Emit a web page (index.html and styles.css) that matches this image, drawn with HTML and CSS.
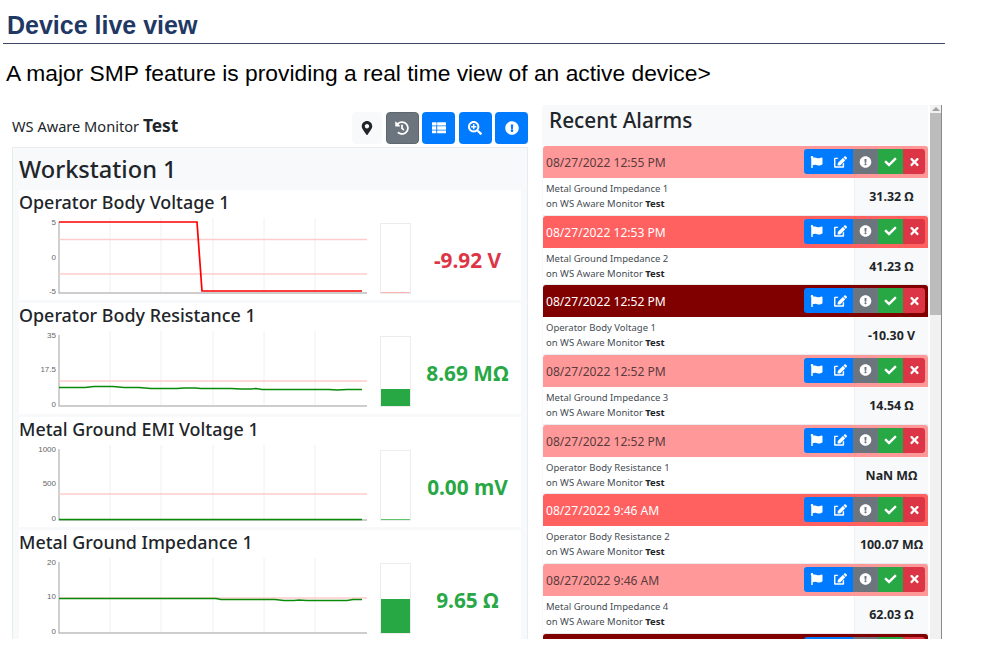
FILE: index.html
```html
<!DOCTYPE html>
<html lang="en">
<head>
<meta charset="utf-8">
<title>Device live view</title>
<link rel="stylesheet" href="styles.css">
</head>
<body>
<svg class="defs" width="0" height="0" aria-hidden="true">
  <symbol id="i-marker" viewBox="0 0 384 512"><path d="M172.268 501.67C26.97 291.031 0 255.406 0 192 0 85.961 85.961 0 192 0s192 85.961 192 192c0 63.406-26.97 99.031-172.268 309.67-9.535 13.774-29.93 13.773-39.464 0zM192 272c44.183 0 80-35.817 80-80s-35.817-80-80-80-80 35.817-80 80 35.817 80 80 80z"/></symbol>
  <symbol id="i-history" viewBox="0 0 512 512"><path d="M504 255.531c.253 136.64-111.18 248.372-247.82 248.468-59.015.042-113.223-20.53-155.822-54.911-11.077-8.94-11.905-25.541-1.839-35.607l11.267-11.267c8.609-8.609 22.353-9.551 31.891-1.984C173.062 425.135 212.781 440 256 440c101.705 0 184-82.311 184-184 0-101.705-82.311-184-184-184-48.814 0-93.149 18.969-126.068 49.932l50.754 50.754c10.08 10.08 2.941 27.314-11.313 27.314H24c-8.837 0-16-7.163-16-16V38.627c0-14.254 17.234-21.393 27.314-11.314l49.372 49.372C129.209 34.136 189.552 8 256 8c136.81 0 247.747 110.78 248 247.531zm-180.912 78.784l9.823-12.63c8.138-10.463 6.253-25.542-4.21-33.679L288 256.349V152c0-13.255-10.745-24-24-24h-16c-13.255 0-24 10.745-24 24v135.651l65.409 50.874c10.463 8.137 25.541 6.253 33.679-4.21z"/></symbol>
  <symbol id="i-list" viewBox="0 0 512 512"><path d="M24 48h120c13 0 24 11 24 24v72c0 13-11 24-24 24H24c-13 0-24-11-24-24V72c0-13 11-24 24-24zM200 48h288c13 0 24 11 24 24v72c0 13-11 24-24 24H200c-7 0-12-5-12-12V60c0-7 5-12 12-12zM24 196h120c7 0 12 5 12 12v96c0 7-5 12-12 12H12c-7 0-12-5-12-12v-96c0-7 5-12 12-12zm176 0h300c7 0 12 5 12 12v96c0 7-5 12-12 12H200c-7 0-12-5-12-12v-96c0-7 5-12 12-12zM12 344h132c7 0 12 5 12 12v84c0 7-5 12-12 12H24c-13 0-24-11-24-24v-72c0-7 5-12 12-12zm188 0h300c7 0 12 5 12 12v72c0 13-11 24-24 24H200c-7 0-12-5-12-12v-84c0-7 5-12 12-12z"/></symbol>
  <symbol id="i-zoom" viewBox="0 0 512 512"><path d="M304 192v32c0 6.6-5.4 12-12 12h-56v56c0 6.6-5.4 12-12 12h-32c-6.6 0-12-5.4-12-12v-56h-56c-6.6 0-12-5.400-12-12v-32c0-6.600 5.400-12 12-12h56v-56c0-6.600 5.400-12 12-12h32c6.600 0 12 5.400 12 12v56h56c6.600 0 12 5.400 12 12zm201 284.700L476.700 505c-9.400 9.400-24.600 9.400-33.900 0L343 405.300c-4.500-4.500-7-10.600-7-17V372c-35.300 27.600-79.700 44-128 44C93.100 416 0 322.900 0 208S93.100 0 208 0s208 93.100 208 208c0 48.300-16.400 92.700-44 128h16.300c6.400 0 12.500 2.500 17 7l99.700 99.700c9.300 9.400 9.300 24.600 0 34zM344 208c0-75.200-60.800-136-136-136S72 132.800 72 208s60.800 136 136 136 136-60.800 136-136z"/></symbol>
  <symbol id="i-alert" viewBox="0 0 512 512"><path d="M504 256c0 136.997-111.043 248-248 248S8 392.997 8 256C8 119.083 119.043 8 256 8s248 111.083 248 248zm-248 50c-25.405 0-46 20.595-46 46s20.595 46 46 46 46-20.595 46-46-20.595-46-46-46zm-43.673-165.346l7.418 136c.347 6.364 5.609 11.346 11.982 11.346h48.546c6.373 0 11.635-4.982 11.982-11.346l7.418-136c.375-6.874-5.098-12.654-11.982-12.654h-63.383c-6.884 0-12.356 5.780-11.981 12.654z"/></symbol>
  <symbol id="i-flag" viewBox="0 0 512 512"><path d="M349.565 98.783C295.978 98.783 251.721 64 184.348 64c-24.955 0-47.309 4.384-68.045 12.013a55.947 55.947 0 0 0 3.586-23.562C118.117 24.015 94.806 1.206 66.338.048 34.345-1.254 8 24.296 8 56c0 19.026 9.497 35.825 24 45.945V488c0 13.255 10.745 24 24 24h16c13.255 0 24-10.745 24-24v-94.400c28.311-12.064 63.582-22.122 114.435-22.122 53.588 0 97.844 34.783 165.217 34.783 48.169 0 86.667-16.294 122.505-40.858C506.840 359.452 512 349.571 512 339.045v-243.100c0-23.393-24.269-38.870-45.485-29.016-34.338 15.948-76.454 31.854-116.950 31.854z"/></symbol>
  <symbol id="i-edit" viewBox="0 0 576 512"><path d="M402.600 83.200l90.200 90.200c3.800 3.800 3.800 10 0 13.800L274.400 405.600l-92.800 10.300c-12.400 1.400-22.900-9.100-21.500-21.500l10.300-92.800L388.800 83.200c3.800-3.800 10-3.800 13.800 0zm162-22.900l-48.800-48.800c-15.200-15.200-39.900-15.200-55.200 0l-35.400 35.400c-3.800 3.800-3.800 10 0 13.800l90.200 90.200c3.800 3.800 10 3.800 13.800 0l35.400-35.400c15.200-15.300 15.200-40 0-55.200zM384 346.200V448H64V128h73.200c3.200 0 6.200-1.300 8.500-3.500l40-40c7.600-7.600 2.200-20.500-8.500-20.500H48C21.500 64 0 85.500 0 112v352c0 26.500 21.500 48 48 48h352c26.500 0 48-21.500 48-48V306.200c0-10.700-12.900-16-20.500-8.500l-40 40c-2.200 2.300-3.500 5.300-3.500 8.500z"/></symbol>
  <symbol id="i-check" viewBox="0 0 512 512"><path d="M173.898 439.404l-166.400-166.400c-9.997-9.997-9.997-26.206 0-36.204l36.203-36.204c9.997-9.998 26.207-9.998 36.204 0L192 312.690 432.095 72.596c9.997-9.997 26.207-9.997 36.204 0l36.203 36.204c9.997 9.997 9.997 26.206 0 36.204l-294.400 294.401c-9.998 9.997-26.207 9.997-36.204-.001z"/></symbol>
  <symbol id="i-times" viewBox="0 0 352 512"><path d="M242.720 256l100.070-100.070c12.280-12.280 12.280-32.190 0-44.480l-22.240-22.240c-12.280-12.280-32.190-12.280-44.480 0L176 189.280 75.930 89.210c-12.280-12.280-32.190-12.280-44.480 0L9.210 111.450c-12.280 12.280-12.280 32.190 0 44.480L109.280 256 9.210 356.070c-12.280 12.280-12.280 32.190 0 44.480l22.240 22.240c12.280 12.280 32.200 12.280 44.480 0L176 322.720l100.070 100.070c12.280 12.280 32.200 12.280 44.480 0l22.240-22.240c12.280-12.280 12.280-32.190 0-44.480L242.720 256z"/></symbol>
  <g id="grid">
    <path class="gridline" d="M91 0V74M142 0V74M194 0V74M245 0V74M296 0V74"/>
    <path class="axis" d="M40 4V75H348"/>
  </g>
</svg>

<header class="doc-head">
  <h1>Device live view</h1>
  <p>A major SMP feature is providing a real time view of an active device&gt;</p>
</header>

<main class="shot">
  <section class="left">
    <div class="toolbar">
      <div class="device">WS Aware Monitor <b>Test</b></div>
      <div class="tools">
        <button class="tool light"><svg class="ic"><use href="#i-marker"/></svg></button>
        <button class="tool gray"><svg class="ic"><use href="#i-history"/></svg></button>
        <button class="tool blue"><svg class="ic"><use href="#i-list"/></svg></button>
        <button class="tool blue"><svg class="ic"><use href="#i-zoom"/></svg></button>
        <button class="tool blue"><svg class="ic"><use href="#i-alert"/></svg></button>
      </div>
    </div>
    <div class="panel">
      <h2>Workstation 1</h2>

      <article class="card">
        <h3>Operator Body Voltage 1</h3>
        <div class="metric">
          <svg class="chart" viewBox="0 0 350 80" width="350" height="80">
            <use href="#grid"/>
            <path class="limit" d="M40 21.500H348M40 56H348"/>
            <path class="line red" d="M40 4H178L183 73H343"/>
            <text class="tick" x="37" y="7">5</text>
            <text class="tick" x="37" y="42">0</text>
            <text class="tick" x="37" y="76">-5</text>
          </svg>
          <div class="gauge"><div class="bar pink"></div></div>
          <div class="value bad">-9.92 V</div>
        </div>
      </article>

      <article class="card">
        <h3>Operator Body Resistance 1</h3>
        <div class="metric">
          <svg class="chart" viewBox="0 0 350 80" width="350" height="80">
            <use href="#grid"/>
            <path class="limit" d="M40 50H348"/>
            <path class="line green" d="M40 56.500H66L75 55.500H94L105 56.500H120L132 57.500H158L165 57H176L182 57.500H212L222 58H232L237 57.500L243 58.500H310L318 59L328 58.500H343"/>
            <text class="tick" x="37" y="7">35</text>
            <text class="tick" x="37" y="41">17.5</text>
            <text class="tick" x="37" y="76">0</text>
          </svg>
          <div class="gauge"><div class="bar ok" style="height:25%"></div></div>
          <div class="value good">8.69 MΩ</div>
        </div>
      </article>

      <article class="card">
        <h3>Metal Ground EMI Voltage 1</h3>
        <div class="metric">
          <svg class="chart" viewBox="0 0 350 80" width="350" height="80">
            <use href="#grid"/>
            <path class="limit" d="M40 49H348"/>
            <path class="line green" d="M40 74.500H343"/>
            <text class="tick" x="37" y="7">1000</text>
            <text class="tick" x="37" y="41">500</text>
            <text class="tick" x="37" y="76">0</text>
          </svg>
          <div class="gauge"><div class="bar thin"></div></div>
          <div class="value good">0.00 mV</div>
        </div>
      </article>

      <article class="card">
        <h3>Metal Ground Impedance 1</h3>
        <div class="metric">
          <svg class="chart" viewBox="0 0 350 80" width="350" height="80">
            <use href="#grid"/>
            <path class="limit" d="M40 40H348"/>
            <path class="line green" d="M40 40.500H197L202 41.500H256L265 42.500H275L280 42L288 42.500H328L334 41.500H343"/>
            <text class="tick" x="37" y="7">20</text>
            <text class="tick" x="37" y="41">10</text>
            <text class="tick" x="37" y="76">0</text>
          </svg>
          <div class="gauge"><div class="bar ok" style="height:49%"></div></div>
          <div class="value good">9.65 Ω</div>
        </div>
      </article>
    </div>
  </section>

  <aside class="right">
    <div class="alarms">
      <h2 class="alarms-title">Recent Alarms</h2>

      <article class="alarm">
        <div class="alarm-head pink-row"><span>08/27/2022 12:55 PM</span>
          <div class="actions"><i class="blue"><svg class="ic"><use href="#i-flag"/></svg></i><i class="blue"><svg class="ic"><use href="#i-edit"/></svg></i><i class="gray"><svg class="ic"><use href="#i-alert"/></svg></i><i class="green-btn"><svg class="ic"><use href="#i-check"/></svg></i><i class="red-btn"><svg class="ic"><use href="#i-times"/></svg></i></div>
        </div>
        <div class="alarm-body"><div class="alarm-text">Metal Ground Impedance 1<br>on WS Aware Monitor <b>Test</b></div><div class="alarm-value">31.32 Ω</div></div>
      </article>

      <article class="alarm">
        <div class="alarm-head red-row"><span>08/27/2022 12:53 PM</span>
          <div class="actions"><i class="blue"><svg class="ic"><use href="#i-flag"/></svg></i><i class="blue"><svg class="ic"><use href="#i-edit"/></svg></i><i class="gray"><svg class="ic"><use href="#i-alert"/></svg></i><i class="green-btn"><svg class="ic"><use href="#i-check"/></svg></i><i class="red-btn"><svg class="ic"><use href="#i-times"/></svg></i></div>
        </div>
        <div class="alarm-body"><div class="alarm-text">Metal Ground Impedance 2<br>on WS Aware Monitor <b>Test</b></div><div class="alarm-value">41.23 Ω</div></div>
      </article>

      <article class="alarm">
        <div class="alarm-head dark-row"><span>08/27/2022 12:52 PM</span>
          <div class="actions"><i class="blue"><svg class="ic"><use href="#i-flag"/></svg></i><i class="blue"><svg class="ic"><use href="#i-edit"/></svg></i><i class="gray"><svg class="ic"><use href="#i-alert"/></svg></i><i class="green-btn"><svg class="ic"><use href="#i-check"/></svg></i><i class="red-btn"><svg class="ic"><use href="#i-times"/></svg></i></div>
        </div>
        <div class="alarm-body"><div class="alarm-text">Operator Body Voltage 1<br>on WS Aware Monitor <b>Test</b></div><div class="alarm-value">-10.30 V</div></div>
      </article>

      <article class="alarm">
        <div class="alarm-head pink-row"><span>08/27/2022 12:52 PM</span>
          <div class="actions"><i class="blue"><svg class="ic"><use href="#i-flag"/></svg></i><i class="blue"><svg class="ic"><use href="#i-edit"/></svg></i><i class="gray"><svg class="ic"><use href="#i-alert"/></svg></i><i class="green-btn"><svg class="ic"><use href="#i-check"/></svg></i><i class="red-btn"><svg class="ic"><use href="#i-times"/></svg></i></div>
        </div>
        <div class="alarm-body"><div class="alarm-text">Metal Ground Impedance 3<br>on WS Aware Monitor <b>Test</b></div><div class="alarm-value">14.54 Ω</div></div>
      </article>

      <article class="alarm">
        <div class="alarm-head pink-row"><span>08/27/2022 12:52 PM</span>
          <div class="actions"><i class="blue"><svg class="ic"><use href="#i-flag"/></svg></i><i class="blue"><svg class="ic"><use href="#i-edit"/></svg></i><i class="gray"><svg class="ic"><use href="#i-alert"/></svg></i><i class="green-btn"><svg class="ic"><use href="#i-check"/></svg></i><i class="red-btn"><svg class="ic"><use href="#i-times"/></svg></i></div>
        </div>
        <div class="alarm-body"><div class="alarm-text">Operator Body Resistance 1<br>on WS Aware Monitor <b>Test</b></div><div class="alarm-value">NaN MΩ</div></div>
      </article>

      <article class="alarm">
        <div class="alarm-head red-row"><span>08/27/2022 9:46 AM</span>
          <div class="actions"><i class="blue"><svg class="ic"><use href="#i-flag"/></svg></i><i class="blue"><svg class="ic"><use href="#i-edit"/></svg></i><i class="gray"><svg class="ic"><use href="#i-alert"/></svg></i><i class="green-btn"><svg class="ic"><use href="#i-check"/></svg></i><i class="red-btn"><svg class="ic"><use href="#i-times"/></svg></i></div>
        </div>
        <div class="alarm-body"><div class="alarm-text">Operator Body Resistance 2<br>on WS Aware Monitor <b>Test</b></div><div class="alarm-value">100.07 MΩ</div></div>
      </article>

      <article class="alarm">
        <div class="alarm-head pink-row"><span>08/27/2022 9:46 AM</span>
          <div class="actions"><i class="blue"><svg class="ic"><use href="#i-flag"/></svg></i><i class="blue"><svg class="ic"><use href="#i-edit"/></svg></i><i class="gray"><svg class="ic"><use href="#i-alert"/></svg></i><i class="green-btn"><svg class="ic"><use href="#i-check"/></svg></i><i class="red-btn"><svg class="ic"><use href="#i-times"/></svg></i></div>
        </div>
        <div class="alarm-body"><div class="alarm-text">Metal Ground Impedance 4<br>on WS Aware Monitor <b>Test</b></div><div class="alarm-value">62.03 Ω</div></div>
      </article>

      <article class="alarm">
        <div class="alarm-head dark-row"><span></span>
          <div class="actions"><i class="blue"></i><i class="blue"></i><i class="gray"></i><i class="green-btn"></i><i class="red-btn"></i></div>
        </div>
      </article>
    </div>
    <div class="scrollbar">
      <div class="scroll-up"></div>
      <div class="scroll-thumb"></div>
    </div>
  </aside>
</main>
</body>
</html>
```
FILE: styles.css
```css
* { box-sizing: border-box; }
html, body { margin: 0; padding: 0; background: #fff; }
body { width: 994px; height: 650px; overflow: hidden; font-family: "Noto Sans", "Liberation Sans", sans-serif; color: #212529; }
.defs { position: absolute; }

.doc-head { font-family: "Liberation Sans", Arial, sans-serif; height: 105px; padding: 11px 0 0 3px; }
.doc-head h1 { width: 942px; margin: 0; height: 33px; padding-left: 4px; border-bottom: 1px solid #3b4a66; font-size: 25px; line-height: 28px; font-weight: 700; color: #1f3864; }
.doc-head p { margin: 16px 0 0 3px; font-size: 22.8px; line-height: 26px; color: #000; }

.shot { display: flex; height: 534px; overflow: hidden; }

.left { width: 542px; padding: 0 14px 0 12px; flex: none; }
.toolbar { display: flex; justify-content: space-between; align-items: flex-start; height: 42px; padding-top: 7px; }
.device { font-size: 14.6px; line-height: 26px; }
.device b { font-size: 17.4px; }
.tools { display: flex; gap: 3.4px; }
.tool { width: 33px; height: 32px; padding: 0; border: 0; border-radius: 4px; display: flex; align-items: center; justify-content: center; color: #fff; }
.tool.light { width: 30px; background: #f8f9fa; color: #212529; }
.tool.gray { background: #6c757d; border: 1px solid #5f676e; }
.tool.blue { background: #007bff; }
.ic { width: 14px; height: 14px; fill: currentColor; display: block; }

.panel { background: #f8f9fa; border: 1px solid #e9ecef; padding: 1px 6px 0; }
.panel h2 { margin: 0; height: 41px; font-size: 23.6px; line-height: 41px; font-weight: 500; }
.card { height: 110.3px; margin-bottom: 3.1px; background: #fff; }
.card h3 { margin: 0; height: 24px; font-size: 17.9px; line-height: 24px; font-weight: 500; }
.metric { display: flex; align-items: flex-start; }
.chart { flex: none; display: block; margin-top: 4px; overflow: visible; }
.gridline { stroke: #f0f0f0; stroke-width: 1; fill: none; }
.axis { stroke: #bdbdbd; stroke-width: 1.4; fill: none; }
.limit { stroke: #ffcccc; stroke-width: 1.5; fill: none; }
.line { stroke-width: 1.7; fill: none; }
.line.red { stroke: #ff0000; }
.line.green { stroke: #0a8a0a; }
.tick { font: 8px "Liberation Sans", Arial, sans-serif; fill: #666; text-anchor: end; }
.gauge { flex: none; width: 31px; height: 71px; margin: 9px 0 0 11px; border: 1px solid #ececec; display: flex; flex-direction: column; justify-content: flex-end; }
.bar.ok { background: #28a745; }
.bar.pink { background: #ffb3b3; height: 1px; }
.bar.thin { background: #5fc46f; height: 1px; }
.value { flex: 1; margin-top: 32px; text-align: center; font-size: 20.8px; line-height: 28px; font-weight: 700; padding-left: 3px; }
.bad { color: #dc3545; }
.good { color: #28a745; }

.right { width: 400px; flex: none; display: flex; }
.alarms { width: 387px; height: 534px; overflow: hidden; background: #f8f9fa; padding: 0 1px; }
.alarms-title { margin: 0; height: 41px; padding-left: 6px; font-size: 20.8px; line-height: 31px; font-weight: 500; }
.alarm { height: 69.67px; }
.alarm-head { height: 32px; padding: 3px; display: flex; justify-content: space-between; border-radius: 3px 3px 0 0; font-size: 12.1px; line-height: 27px; }
.pink-row { background: #ff9999; color: #5a3a3c; }
.red-row { background: #ff6060; color: #fff; }
.dark-row { background: #800000; color: #fff; }
.actions { display: flex; height: 25px; }
.actions i { width: 25px; display: flex; align-items: center; justify-content: center; color: #fff; }
.actions .ic { width: 13px; height: 12px; }
.actions .blue { background: #007bff; width: 24.5px; }
.actions .blue:first-child { border-radius: 3px 0 0 3px; }
.actions .gray { background: #6c757d; }
.actions .green-btn { background: #28a745; }
.actions .red-btn { background: #dc3545; width: 22px; border-radius: 0 3px 3px 0; }
.alarm-body { height: 37.67px; display: flex; background: #fff; border-bottom: 1px solid #e9ecef; }
.alarm-text { flex: 1; padding: 3px; font-size: 9.5px; line-height: 15px; color: #454c53; }
.alarm-text b { color: #212529; }
.alarm-value { width: 74px; background: #f8f9fa; border-left: 1px solid #eef0f2; text-align: center; font-size: 12.4px; line-height: 37px; font-weight: 700; }

.scrollbar { width: 14px; margin-left: -1px; background: #f1f1f1; border-left: 2px solid #fff; border-right: 1px solid #8a8a8a; }
.scroll-up { height: 8px; position: relative; display: flex; justify-content: center; padding-top: 2px; }
.scroll-up::before { content: ""; width: 0; height: 0; border-left: 4px solid transparent; border-right: 4px solid transparent; border-bottom: 4px solid #a0a0a0; }
.scroll-thumb { height: 202px; background: #bcbcbc; }
```
